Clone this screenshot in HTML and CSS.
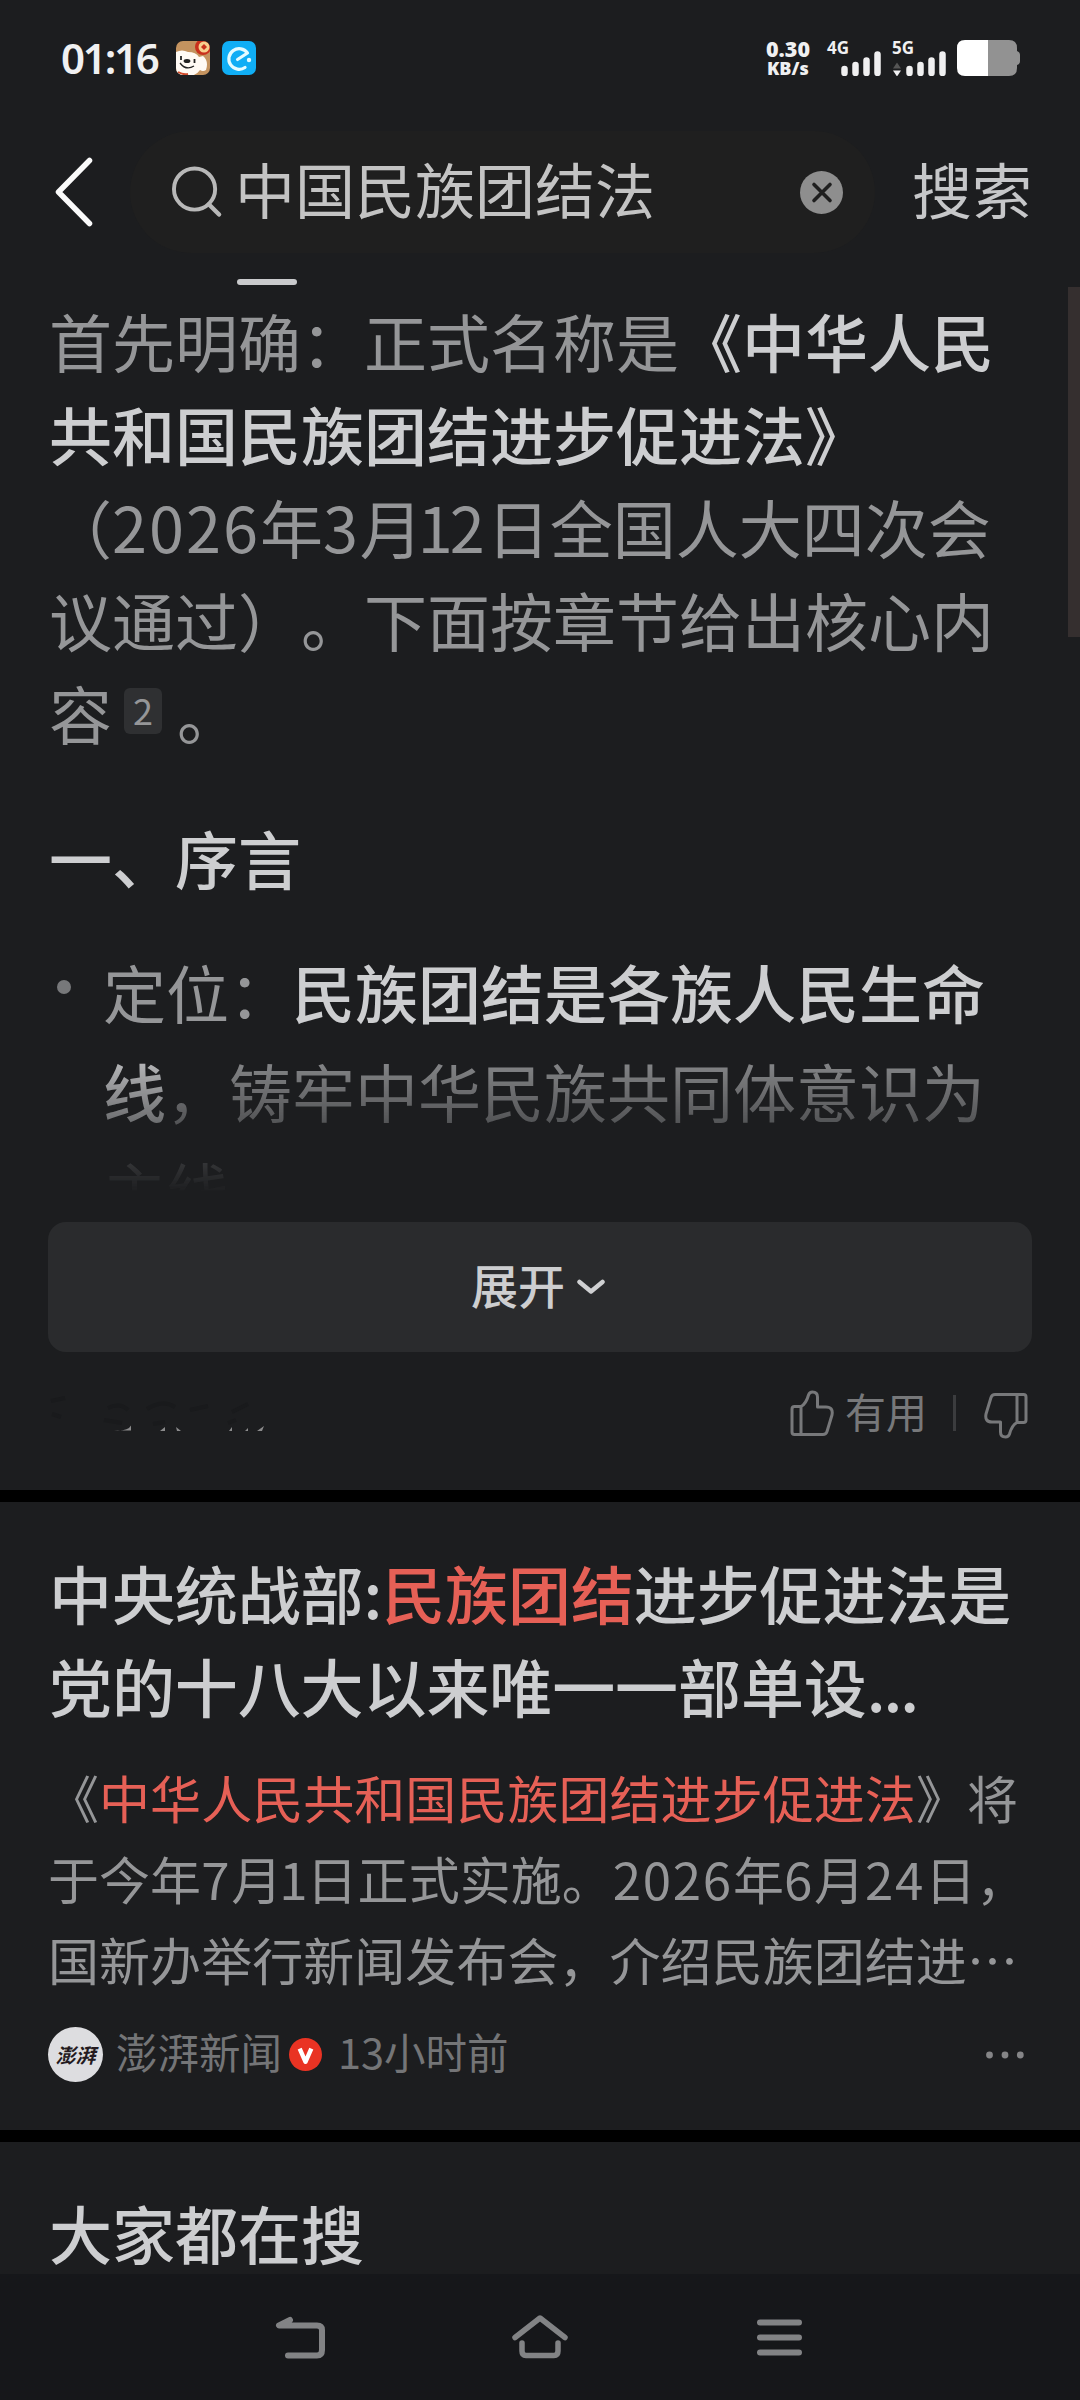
FILE: index.html
```html
<!DOCTYPE html>
<html lang="zh-CN">
<head>
<meta charset="utf-8">
<title>中国民族团结法</title>
<link rel="stylesheet" href="styles.css">
</head>
<body>
<div class="screen">
  <header class="status">
    <span class="time">01:16</span>
    <svg class="app" viewBox="0 0 34 34"><defs><clipPath id="r"><rect width="34" height="34" rx="7"/></clipPath></defs><g clip-path="url(#r)"><rect width="34" height="34" fill="#c4935f"/><path d="M0 11q6-3 12 0q8 0 11 5l4-1q6 5 3 14q-3 2-6 0q-4 6-12 6H0z" fill="#fffaf4"/><circle cx="27" cy="6" r="8" fill="#c9301c"/><circle cx="28" cy="6" r="5.5" fill="#f7cf8d"/><path d="M28 3l3 3-3 3-3-3z" fill="#c9301c"/><ellipse cx="11" cy="20" rx="3.4" ry="2" fill="#222"/><path d="M5 15v4M18.500 18v4" stroke="#222" stroke-width="1.800"/><path d="M4 22q6 8 14 3" fill="none" stroke="#222" stroke-width="1.300"/><path d="M2 31q5 3 10 2" stroke="#d14a2b" stroke-width="2" fill="none"/></g></svg>
    <svg class="app app-e" viewBox="0 0 34 34"><rect width="34" height="34" rx="7" fill="#10aef5"/><path d="M15.500 18.500L25.500 12A10.300 10.300 0 1 0 23 26.500" fill="none" stroke="#e4fbff" stroke-width="3.200" stroke-linecap="round" stroke-linejoin="round"/><circle cx="27" cy="19" r="2.200" fill="#e4fbff"/></svg>
    <span class="grow"></span>
    <span class="speed"><b>0.30</b><b class="unit">KB/s</b></span>
    <span class="signal"><b>4G</b><svg viewBox="0 0 56 36"><path d="M17.500 29v4M28.500 25v8M39.500 20.500V33M50.500 14.500V33" stroke="#f0f0f1" stroke-width="6.500" stroke-linecap="round"/></svg></span>
    <span class="signal second"><b>5G</b><svg viewBox="0 0 56 36"><path d="M17.500 29v4M28.500 25v8M39.500 20.500V33M50.500 14.500V33" stroke="#f0f0f1" stroke-width="6.500" stroke-linecap="round"/><path d="M1 28.500h8l-4-6z" fill="#555"/><path d="M1 30.500h8l-4 6z" fill="#f0f0f1"/></svg></span>
    <svg class="battery" viewBox="0 0 63 36"><path d="M31 0h21q8 0 8 8v3q3 1 3 4v6q0 3-3 4v3q0 8-8 8H31z" fill="#929292"/><path d="M31 0H8Q0 0 0 8v20q0 8 8 8h23z" fill="#fff"/></svg>
  </header>

  <div class="searchbar">
    <svg class="back" viewBox="0 0 38 72"><path d="M34.500 3.500L3.500 35L34.500 66.500" fill="none" stroke="#fafafa" stroke-width="5.500" stroke-linecap="round" stroke-linejoin="round"/></svg>
    <div class="field">
      <svg class="lens" viewBox="0 0 52 52"><circle cx="23" cy="23" r="21" fill="none" stroke="#b8b8b8" stroke-width="4"/><path d="M37.500 38.500L48 49" stroke="#b8b8b8" stroke-width="4.500" stroke-linecap="round"/></svg>
      <span class="query">中国民族团结法</span>
      <svg class="clear" viewBox="0 0 43 43"><circle cx="21.500" cy="21.500" r="21.500" fill="#8e8e8e"/><path d="M14 13.500l16 16M30 13.500l-16 16" stroke="#1f1f1f" stroke-width="3.600" stroke-linecap="round"/></svg>
    </div>
    <span class="go">搜索</span>
  </div>
  <div class="tab"><i></i></div>

  <main>
    <section class="answer">
      <p class="intro">
        <span>首先明确：正式名称是<b>《中华人民</b></span>
        <span><b>共和国民族团结进步促进法》</b></span>
        <span>（<em>2026</em>年<em>3</em>月<em class="one">1</em><em>2</em>日全国人大四次会</span>
        <span>议通过）。下面按章节给出核心内</span>
        <span>容<sup>2</sup>。</span>
      </p>
      <h2>一、序言</h2>
      <ul class="points">
        <li><span>定位：<b>民族团结是各族人民生命</b></span><span><b>线</b>，铸牢中华民族共同体意识为</span><span>主线</span></li>
      </ul>
      <div class="expand"><span>展开</span><svg viewBox="0 0 28 16"><path d="M2.500 3L14 12.500L25.500 3" fill="none" stroke="#cfd0d2" stroke-width="4.500" stroke-linecap="round" stroke-linejoin="round"/></svg></div>
      <div class="feedback">
        <svg class="remnant" viewBox="0 0 220 44"><path d="M3 10l14-3M4 23l9 3M60 17q12-6 20 2M99 18q16-10 28-2M142 19l18-4M184 21l16-8M56 29l18 3M105 33l12-2M180 32l8-3" stroke="#191a1c" stroke-width="4" fill="none"/><path d="M66 39.500q14 1 17-5v5zM112 40l5-4v4zM128 36l5 4h-4zM181 40l3-4v4zM197 40l3-3v3zM209 40l7-5-2 5z" fill="#8b8b8c"/></svg>
        <span class="grow"></span>
        <svg class="thumb" viewBox="0 0 44 46"><g fill="none" stroke="#77787a" stroke-width="3" stroke-linejoin="round"><path d="M11 16.500H4.500Q2 16.500 2 19V42Q2 44.500 4.500 44.500H33Q36 44.500 37 41.500L42 25Q43.500 17 36 17H27.500V7Q27.500 2 22.500 2Q19.500 2 18.500 5Q16 14 11 16.500zM11 16.500V44.500"/></g></svg>
        <span class="useful">有用</span><i class="bar"></i>
        <svg class="thumb down" viewBox="0 0 44 46"><g transform="rotate(180 22 23)" fill="none" stroke="#77787a" stroke-width="3" stroke-linejoin="round"><path d="M11 16.500H4.500Q2 16.500 2 19V42Q2 44.500 4.500 44.500H33Q36 44.500 37 41.500L42 25Q43.500 17 36 17H27.500V7Q27.500 2 22.500 2Q19.500 2 18.500 5Q16 14 11 16.500zM11 16.500V44.500"/></g></svg>
      </div>
    </section>

    <article class="result">
      <h3><span>中央统战部:<mark>民族团结</mark>进步促进法是</span><span>党的十八大以来唯一一部单设<em class="dots">...</em></span></h3>
      <p class="snippet">
        <span>《<mark>中华人民共和国民族团结进步促进法</mark>》将</span>
        <span>于今年<em>7</em>月<em class="one">1</em>日正式实施。<em>2026</em>年<em>6</em>月<em>24</em>日，</span>
        <span>国新办举行新闻发布会，介绍民族团结进⋯</span>
      </p>
      <div class="meta">
        <span class="avatar">澎湃</span>
        <span class="source">澎湃新闻</span>
        <svg class="verified" viewBox="0 0 34 34"><circle cx="17" cy="17" r="17" fill="#e93323"/><path d="M11 11L17 24.500L23 11" fill="none" stroke="#fff" stroke-width="4.500" stroke-linejoin="round"/></svg>
        <span class="when"><em class="one">1</em>3小时前</span>
        <span class="grow"></span>
        <svg class="more" viewBox="0 0 38 8"><g fill="#858587"><circle cx="3.500" cy="4" r="3.400"/><circle cx="19" cy="4" r="3.400"/><circle cx="34.300" cy="4" r="3.400"/></g></svg>
      </div>
    </article>

    <section class="related"><h2>大家都在搜</h2></section>
  </main>

  <nav>
    <svg viewBox="0 0 50 50"><path d="M15 6L4 11.500H42Q47 11.500 47 16V36Q47 41.500 42 41.500H13" fill="none" stroke="#828385" stroke-width="6" stroke-linecap="round" stroke-linejoin="round"/></svg>
    <svg class="home" viewBox="0 0 58 50"><path d="M4 23.500L29 4L54 23.500M11 29V37Q11 41.500 15 41.500H43Q47 41.500 47 37V29" fill="none" stroke="#828385" stroke-width="5.500" stroke-linecap="round" stroke-linejoin="round"/></svg>
    <svg viewBox="0 0 50 50"><path d="M5 8.500H44M5 23.500H44M5 38.500H44" stroke="#828385" stroke-width="6" stroke-linecap="round"/></svg>
  </nav>
  <i class="scroll"></i>
</div>
</body>
</html>
```

FILE: styles.css
```css
* { box-sizing: border-box; margin: 0; padding: 0; }
body { background: #1c1d1f; font-family: "Noto Sans CJK SC", sans-serif; color: #959698; text-spacing-trim: space-all; }
svg { display: block; flex: none; }
em, i { font-style: normal; }
.grow { flex: 1; }
.screen { position: relative; width: 1080px; height: 2400px; overflow: hidden; display: flex; flex-direction: column; }

.status { height: 131px; padding: 40px 60px 0 61px; display: flex; align-items: flex-start; flex: none; color: #f0f0f1; font-family: "Noto Sans", sans-serif; }
.time { width: 115px; font-size: 42px; line-height: 35px; font-weight: 600; letter-spacing: -2.200px; white-space: nowrap; }
.app { width: 34px; height: 34px; margin-top: 1px; }
.app-e { margin-left: 12px; }
.speed { width: 61px; display: flex; flex-direction: column; font-size: 21.500px; line-height: 17px; font-weight: 700; }
.speed .unit { font-size: 18px; padding-left: 1px; line-height: 22px; }
.signal { position: relative; width: 65px; height: 36px; }
.signal b { position: absolute; left: 0; top: 0; font-size: 17px; line-height: 15px; font-weight: 700; }
.signal svg { width: 56px; height: 36px; }
.battery { width: 63px; height: 36px; }

.searchbar { height: 122px; flex: none; display: flex; align-items: center; padding-left: 55px; }
.back { width: 38px; height: 72px; margin: 2px 37px 0 0; }
.field { width: 745px; height: 122px; border-radius: 61px; background: #1f1f1f; display: flex; align-items: center; padding-left: 42px; }
.lens { width: 51px; height: 52px; }
.query { width: 565px; margin: -9px 0 0 12px; font-size: 60px; line-height: 86px; color: #c3c3c3; white-space: nowrap; }
.clear { width: 43px; height: 43px; }
.go { margin: -9px 0 0 37px; font-size: 60px; line-height: 86px; color: #c6c7c9; white-space: nowrap; }
.tab { height: 40px; flex: none; padding: 26px 0 0 237px; }
.tab i { display: block; width: 60px; height: 6px; border-radius: 3px; background: #c9cacc; }

main { height: 1981px; flex: none; }
.answer { height: 1197px; padding: 0 48px; font-size: 63px; }
.answer b { color: #cdced0; font-weight: 500; }
.intro span, .points span, .result h3 span, .snippet span { display: block; white-space: nowrap; }
.intro { line-height: 93px; padding-left: 1px; }
.intro span { height: 93px; }
.intro em { letter-spacing: 2px; }
.intro em.one { margin-left: -5px; letter-spacing: -3px; }
sup { display: inline-block; width: 38px; height: 46px; margin: 0 15px 0 12px; border-radius: 6px; background: #2f3032; font-size: 36px; line-height: 43px; text-align: center; vertical-align: 14px; }
h2 { font-size: 63px; font-weight: 500; line-height: 93px; color: #cdced0; padding-left: 1px; }
.answer h2 { margin-top: 52px; }
.points { position: relative; margin-top: 38px; height: 250px; overflow: hidden; padding-left: 55px; list-style: none; line-height: 99px; -webkit-mask-image: linear-gradient(#000 100px, transparent 252px); mask-image: linear-gradient(#000 100px, transparent 252px); }
.points::before { content: ""; position: absolute; left: 9px; top: 39px; width: 14px; height: 14px; border-radius: 50%; background: #77787a; }
.points span { height: 99px; }
.expand { margin-top: 31px; height: 130px; border-radius: 18px; background: #2a2b2d; display: flex; align-items: center; justify-content: center; font-size: 47px; font-weight: 500; color: #cdced0; line-height: 60px; padding-right: 4px; }
.expand span { margin-top: -6px; }
.expand svg { width: 28px; height: 16px; margin-left: 12px; }
.feedback { height: 86px; margin-top: 18px; display: flex; align-items: center; font-size: 41px; color: #77787a; }
.remnant { width: 220px; height: 44px; }
.thumb { width: 44px; height: 46px; margin-top: 0; }
.useful { margin: -7px 0 0 11px; width: 108px; white-space: nowrap; }
.bar { width: 3px; height: 36px; background: #3b3c3e; margin-right: 28px; }
.thumb.down { margin: 6px 4px 0 0; }

.result { height: 652px; border-top: 12px solid #000; border-bottom: 12px solid #000; padding: 43px 48px 0; }
h3 { font-size: 63px; line-height: 93px; font-weight: 500; color: #cdced0; letter-spacing: -.1px; padding-left: 1px; }
.dots { letter-spacing: -2px; }
mark { background: none; color: #e66056; }
.snippet { margin-top: 26px; font-size: 51px; line-height: 81px; letter-spacing: .05px; }
.snippet em { letter-spacing: 1.700px; }
.snippet em.one { margin-left: -3px; letter-spacing: -1px; }
.meta { margin-top: 27px; height: 55px; display: flex; align-items: center; font-size: 41.500px; color: #747577; white-space: nowrap; line-height: 55px; }
.avatar { width: 55px; height: 55px; border-radius: 50%; background: #dddde0; color: #241a20; font-size: 20px; font-weight: 700; font-style: italic; text-align: center; }
.source { margin: -7px 0 0 13px; width: 173px; }
.verified { width: 33px; height: 33px; }
.when { margin: -7px 0 0 19px; }
.when em { margin-left: -3px; letter-spacing: 0; }
.more { width: 38px; height: 8px; margin-right: 8px; }
.related { padding: 43px 48px 0; height: 132px; overflow: hidden; }

nav { height: 126px; flex: none; background: #16171a; display: flex; justify-content: center; gap: 186px; padding-top: 40px; }
nav svg { width: 50px; height: 50px; }
nav .home { width: 58px; }
.scroll { position: absolute; right: 0; top: 287px; width: 12px; height: 350px; background: #352f2f; }
```
